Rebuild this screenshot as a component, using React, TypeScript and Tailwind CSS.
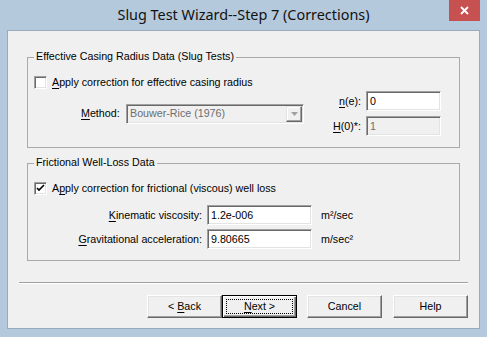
import React from "react";

const uiFont = { fontFamily: '"Liberation Sans", Arial, sans-serif' };

const U = ({ children }: { children: React.ReactNode }) => (
  <span className="underline underline-offset-[2px] decoration-[1px]">{children}</span>
);

const Checkbox = ({ checked }: { checked?: boolean }) => (
  <span className="w-[13px] h-[13px] shrink-0 bg-white border border-t-[#a0a0a0] border-l-[#a0a0a0] border-b-white border-r-white shadow-[inset_1px_1px_0_#696969,inset_-1px_-1px_0_#e3e3e3] flex items-center justify-center">
    {checked && (
      <svg width="9" height="9" viewBox="0 0 9 9">
        <path d="M1 4 L3 6 L8 1" stroke="#000" strokeWidth="1.6" fill="none" />
      </svg>
    )}
  </span>
);

const TextBox = ({
  value,
  width,
  disabled,
}: {
  value: string;
  width: string;
  disabled?: boolean;
}) => (
  <div
    className={`${width} h-[20px] flex items-center pl-[3px] border border-t-[#a0a0a0] border-l-[#a0a0a0] border-b-white border-r-white shadow-[inset_1px_1px_0_#696969,inset_-1px_-1px_0_#e3e3e3] ${
      disabled ? "bg-[#f0f0f0] text-[#6d6d6d]" : "bg-white text-black"
    }`}
  >
    {value}
  </div>
);

const GroupBox = ({
  title,
  className,
  children,
}: {
  title: string;
  className: string;
  children: React.ReactNode;
}) => (
  <div className={`relative mx-[19px] border border-[#a9a9a9] ${className}`}>
    <span className="absolute -top-[8px] left-[6px] px-[2px] bg-[#f0f0f0] leading-[13px]">
      {title}
    </span>
    {children}
  </div>
);

const Button = ({
  children,
  isDefault,
  className = "",
}: {
  children: React.ReactNode;
  isDefault?: boolean;
  className?: string;
}) => (
  <div
    className={`relative w-[75px] h-[23px] flex items-center justify-center bg-[#f0f0f0] ${
      isDefault
        ? "border border-black shadow-[inset_1px_1px_0_#fff,inset_-1px_-1px_0_#696969,inset_-2px_-2px_0_#a0a0a0]"
        : "border border-t-white border-l-white border-b-[#696969] border-r-[#696969] shadow-[inset_-1px_-1px_0_#a0a0a0,inset_1px_1px_0_#e3e3e3]"
    } ${className}`}
  >
    {isDefault && (
      <span className="absolute inset-[3px] border border-dotted border-black" />
    )}
    <span className="relative">{children}</span>
  </div>
);

export default function App() {
  return (
    <div
      className="relative w-[487px] h-[337px] bg-[#b5c9dc] px-[7px] pb-[8px] flex flex-col text-[10.7px] text-black"
      style={uiFont}
    >
      <div
        className="h-[30px] flex items-center justify-center text-[14.4px] text-[#111]"
        style={{ fontFamily: '"Noto Sans", "Open Sans", sans-serif' }}
      >
        Slug Test Wizard--Step 7 (Corrections)
      </div>
      <div className="absolute top-0 right-[7px] w-[31px] h-[21px] bg-[#c75050] flex items-center justify-center">
        <svg width="9" height="9" viewBox="0 0 9 9">
          <path d="M1 1 L8 8 M8 1 L1 8" stroke="#fff" strokeWidth="1.8" />
        </svg>
      </div>

      <div className="flex-1 border border-[#98aabb] bg-[#f0f0f0] flex flex-col">
        <GroupBox
          title="Effective Casing Radius Data (Slug Tests)"
          className="mt-[26px] pt-[18px] pb-[11px] pl-[6px] pr-[18px]"
        >
          <div className="h-[13px] flex items-center gap-[5px]">
            <Checkbox />
            <span>
              <U>A</U>pply correction for effective casing radius
            </span>
          </div>
          <div className="mt-[2px] flex items-center justify-between">
            <div className="ml-[47px] flex items-center">
              <span className="w-[45px]">
                <U>M</U>ethod:
              </span>
              <div className="w-[178px] h-[20px] flex items-center justify-between pl-[3px] pr-[1px] bg-[#f0f0f0] text-[#6d6d6d] border border-t-[#a0a0a0] border-l-[#a0a0a0] border-b-white border-r-white shadow-[inset_1px_1px_0_#696969,inset_-1px_-1px_0_#e3e3e3]">
                <span>Bouwer-Rice (1976)</span>
                <div className="w-[16px] h-[16px] flex items-center justify-center border border-t-[#e3e3e3] border-l-[#e3e3e3] border-b-[#696969] border-r-[#696969] shadow-[inset_-1px_-1px_0_#a0a0a0,inset_1px_1px_0_#fff]">
                  <svg width="7" height="4" viewBox="0 0 7 4">
                    <path d="M0 0 H7 L3.5 4 Z" fill="#a0a0a0" />
                  </svg>
                </div>
              </div>
            </div>
            <div className="flex flex-col gap-[5px]">
              <div className="flex items-center justify-end gap-[5px]">
                <span>
                  <U>n</U>(e):
                </span>
                <TextBox value="0" width="w-[75px]" />
              </div>
              <div className="flex items-center justify-end gap-[5px]">
                <span>
                  <U>H</U>(0)*:
                </span>
                <TextBox value="1" width="w-[75px]" disabled />
              </div>
            </div>
          </div>
        </GroupBox>

        <GroupBox
          title="Frictional Well-Loss Data"
          className="mt-[15px] pt-[18px] pb-[11px] pl-[6px]"
        >
          <div className="h-[13px] flex items-center gap-[5px]">
            <Checkbox checked />
            <span>
              A<U>p</U>ply correction for frictional (viscous) well loss
            </span>
          </div>
          <div className="mt-[10px] flex flex-col gap-[4px]">
            <div className="flex items-center">
              <span className="w-[168px] text-right">
                <U>K</U>inematic viscosity:
              </span>
              <div className="ml-[5px]">
                <TextBox value="1.2e-006" width="w-[105px]" />
              </div>
              <span className="ml-[9px]">m²/sec</span>
            </div>
            <div className="flex items-center">
              <span className="w-[168px] text-right">
                <U>G</U>ravitational acceleration:
              </span>
              <div className="ml-[5px]">
                <TextBox value="9.80665" width="w-[105px]" />
              </div>
              <span className="ml-[9px]">m/sec²</span>
            </div>
          </div>
        </GroupBox>

        <div className="mx-[11px] mt-[21px] h-[2px] border-t border-t-[#a0a0a0] border-b border-b-white" />

        <div className="mt-[11px] pr-[11px] flex justify-end">
          <Button>
            &lt; <U>B</U>ack
          </Button>
          <Button isDefault>
            <U>N</U>ext &gt;
          </Button>
          <Button className="ml-[10px]">Cancel</Button>
          <Button className="ml-[11px]">Help</Button>
        </div>
      </div>
    </div>
  );
}
